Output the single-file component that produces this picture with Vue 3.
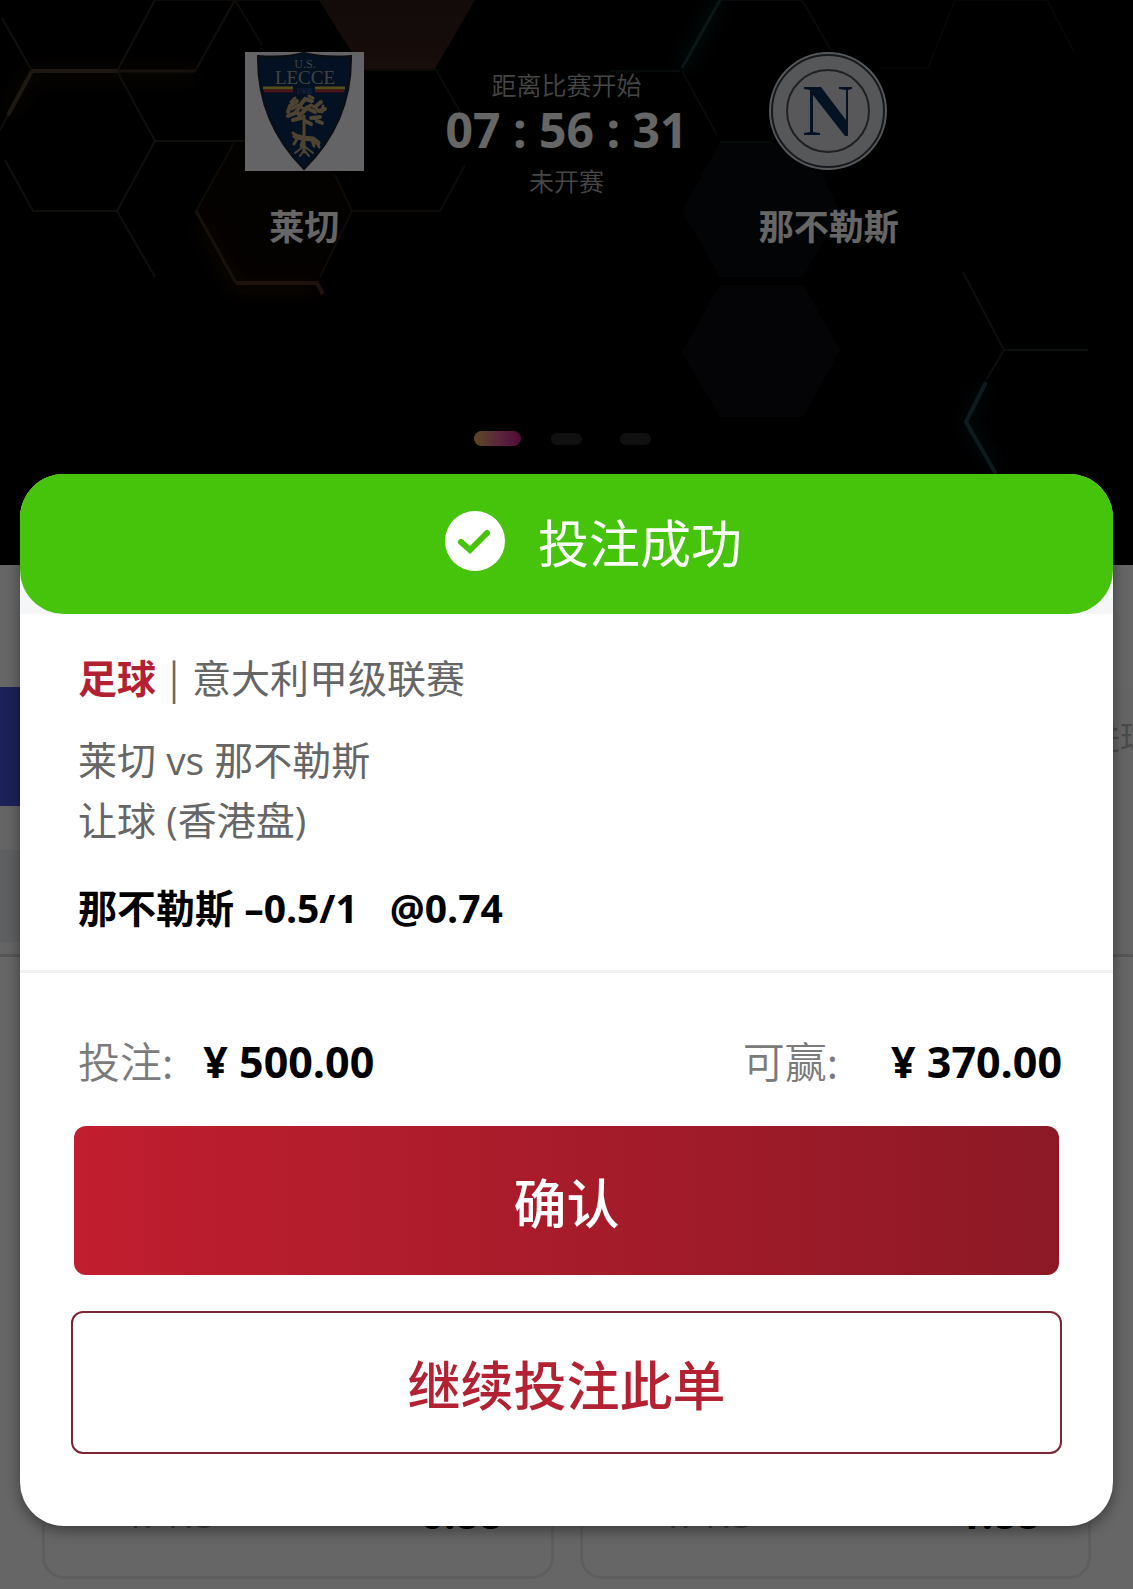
<script setup>
import { ref } from 'vue'

const open = ref(true)
const selections = [
  { line: '1/1.5', odds: '0.88' },
  { line: '1/1.5', odds: '1.88' },
]
</script>

<template>
  <div class="page">
    <header class="match">
      <svg class="hexes" viewBox="0 0 1133 565" preserveAspectRatio="xMidYMin slice" fill="none" aria-hidden="true">
        <defs>
          <filter id="glow" x="-50%" y="-50%" width="200%" height="200%">
            <feGaussianBlur stdDeviation="9" />
          </filter>
          <linearGradient id="amber" x1="0" y1="0" x2="0" y2="1">
            <stop offset="0" stop-color="#2c1c18" />
            <stop offset="1" stop-color="#3c231b" />
          </linearGradient>
        </defs>
        <path d="M319 0H475L434 70H363Z" fill="url(#amber)" />
        <path d="M235 141L196 211L236 283H317L352 211L330 160Z" fill="#0b0503" />
        <path d="M720 142H805L840 211L803 277H720L682 211Z" fill="#080a11" />
        <path d="M720 285H803L840 350L803 417H720L682 352Z" fill="#0a0c10" />
        <g filter="url(#glow)" stroke-width="12" opacity="0.6">
          <path d="M10 110L32 74H195" stroke="#2a1c08" />
          <path d="M200 222L236 288H318" stroke="#341606" />
          <path d="M720 0L682 68" stroke="#06302e" />
          <path d="M986 385L966 422L996 470" stroke="#08222e" />
        </g>
        <g stroke="#2c2620" stroke-width="2">
          <path d="M2 18L32 71M155 0L117 71L155 141L117 211L155 277M235 0L195 71" />
          <path d="M0 130L32 71H195M155 141H245M117 211H33L5 160" />
          <path d="M235 141L196 211L236 283M235 0L262 45M335 175L352 211H440L465 165M352 211L320 277" stroke="#251a14" />
          <path d="M363 70H436L462 115M156 0H320" stroke="#201b12" />
        </g>
        <path d="M32 71H117M32 71L8 115" stroke="#4a3d2c" stroke-width="4" />
        <path d="M117 71H195M196 211L236 283" stroke="#3a2c20" stroke-width="3" />
        <path d="M236 283H317L323 294" stroke="#4b2d1f" stroke-width="4" />
        <g stroke="#121c1c" stroke-width="2">
          <path d="M720 0H802L831 50M682 71L717 135M610 71H680M720 142H770" />
          <path d="M955 0L928 68H880M955 0H1047L1073 50" stroke="#0d1116" />
          <path d="M963 272L1004 350L986 380M1004 350H1088" stroke="#1b2626" />
        </g>
        <path d="M720 0L682 68" stroke="#1c3a3a" stroke-width="3" />
        <path d="M986 382L966 422L996 474" stroke="#21454a" stroke-width="4" />
      </svg>

      <div class="teams">
        <div class="team">
          <svg class="crest" viewBox="0 0 119 119" role="img" aria-label="Lecce">
            <rect width="119" height="119" fill="#fbf8fc" />
            <path d="M13 4Q40 6 59 1Q80 6 106 4Q107 70 59 117Q12 70 13 4Z" fill="#082c57" stroke="#1d242c" stroke-width="2" />
            <text x="60" y="16" class="crest-text" font-size="12">U.S.</text>
            <text x="60" y="32" class="crest-text" font-size="19">LECCE</text>
            <path d="M18 36H48M70 36H100" stroke="#d8c43c" stroke-width="3" />
            <path d="M19 39H48M70 39H99" stroke="#b0323c" stroke-width="3" />
            <text x="59" y="42" class="crest-text dim" font-size="8">1908</text>
            <g stroke="#c4a67c" fill="none" stroke-linecap="round">
              <path d="M59 64V100" stroke-width="3" />
              <path d="M43 60L45 54L52 49M56 52L60 47L67 49M71 54L76 50M74 59L80 57M43 64L50 61L54 56M56 62L62 56L70 60M66 66L75 65M48 68L56 66L52 60M60 69L66 72M72 69L77 71" stroke-width="4" />
              <path d="M46 50L50 46M64 44L68 46M78 54L77 60M47 57L53 53L59 57L66 53L72 57" stroke-width="3" />
              <path d="M50 84L57 86L68 87L73 91" stroke-width="5" />
              <path d="M52 87L49 92M58 88L56 94M67 88L69 94M48 81L52 84M73 91L74 95" stroke-width="3" />
              <path d="M59 94L50 101M59 94L68 101M59 98L55 104M59 98L64 104" stroke-width="2" />
            </g>
          </svg>
          <strong class="team-name">莱切</strong>
        </div>

        <div class="clock">
          <span class="clock-note">距离比赛开始</span>
          <strong class="clock-time">07 : 56 : 31</strong>
          <span class="clock-note">未开赛</span>
        </div>

        <div class="team">
          <svg class="crest" viewBox="0 0 119 119" role="img" aria-label="Napoli">
            <circle cx="59" cy="59" r="59" fill="#d4dade" />
            <circle cx="59" cy="59" r="56" fill="none" stroke="#37404a" stroke-width="2" />
            <circle cx="59" cy="59" r="41" fill="#dcdce0" stroke="#4b5056" stroke-width="2" />
            <path d="M35 35H52L77 68V38L70 37V35H83V37L79 38V84H76L44 43V80L51 81V83H35V81L41 80V38L35 37Z" fill="#0a2e58" />
          </svg>
          <strong class="team-name">那不勒斯</strong>
        </div>
      </div>

      <div class="pager">
        <span class="dot active"></span>
        <span class="dot"></span>
        <span class="dot"></span>
      </div>
    </header>

    <div class="strip"></div>
    <nav class="tabs">
      <span class="tab current"></span>
      <span class="tab">进球</span>
    </nav>
    <div class="filters"><span class="filter"></span></div>
    <main class="markets">
      <section v-for="(item, i) in selections" :key="i" class="market">
        <span class="market-line">{{ item.line }}</span>
        <strong class="market-odds">{{ item.odds }}</strong>
      </section>
    </main>

    <div v-if="open" class="overlay">
      <section class="dialog" role="dialog" aria-labelledby="dialog-title">
        <div class="dialog-head">
          <div class="banner">
            <svg class="tick" viewBox="0 0 60 60" aria-hidden="true">
              <circle cx="30" cy="30" r="30" fill="#fff" />
              <path d="M16 31L25 39L42 22" fill="none" stroke="#46c30b" stroke-width="6" stroke-linecap="round" stroke-linejoin="miter" />
            </svg>
            <h1 id="dialog-title" class="banner-title">投注成功</h1>
          </div>
        </div>

        <div class="details">
          <p class="row league"><strong class="sport">足球</strong> <span class="bar">|</span> 意大利甲级联赛</p>
          <p class="row">莱切 vs 那不勒斯</p>
          <p class="row">让球 (香港盘)</p>
          <p class="row pick"><span>那不勒斯 –0.5/1</span><span>@0.74</span></p>
        </div>

        <div class="summary">
          <dl class="money">
            <div class="sum">
              <dt>投注:</dt>
              <dd>¥ 500.00</dd>
            </div>
            <div class="sum win">
              <dt>可赢:</dt>
              <dd>¥ 370.00</dd>
            </div>
          </dl>
          <button type="button" class="btn primary" @click="open = false">确认</button>
          <button type="button" class="btn outline">继续投注此单</button>
        </div>
      </section>
    </div>
  </div>
</template>

<style>
body {
  margin: 0;
  background: #fff;
}
</style>

<style scoped>
.page {
  position: relative;
  min-height: 100vh;
  overflow: hidden;
  background: #fff;
  font-family: "Noto Sans CJK SC", sans-serif;
}

.match {
  position: relative;
  display: flex;
  flex-direction: column;
  justify-content: space-between;
  box-sizing: border-box;
  height: 565px;
  padding: 52px 42px 119px;
  background: #020203;
  color: #fff;
}

.hexes {
  position: absolute;
  inset: 0;
  width: 100%;
  height: 100%;
}

.teams {
  position: relative;
  display: flex;
  justify-content: center;
}

.team,
.clock {
  display: flex;
  flex: 0 1 25%;
  flex-direction: column;
  align-items: center;
}

.crest {
  width: 119px;
  height: 119px;
}

.crest-text {
  fill: #a3a7a4;
  font-family: "Liberation Serif", serif;
  text-anchor: middle;
}

.crest-text.dim {
  fill: #56708c;
}

.team-name {
  margin-top: 29px;
  font-size: 35px;
  line-height: 50px;
}

.clock {
  padding-top: 14px;
  white-space: nowrap;
}

.clock-note {
  color: #b0aeae;
  font-size: 25px;
  font-weight: 350;
  line-height: 36px;
}

.clock-time {
  margin-bottom: 4px;
  font-family: "Open Sans", "Noto Sans CJK SC", sans-serif;
  font-size: 48px;
  line-height: 56px;
}

.pager {
  position: relative;
  display: flex;
  align-items: center;
  justify-content: center;
  gap: 30px;
  padding-right: 8px;
  height: 15px;
}

.dot {
  width: 31px;
  height: 12px;
  border-radius: 6px;
  background: #2a2a2c;
}

.dot.active {
  width: 47px;
  height: 15px;
  border-radius: 8px;
  background: linear-gradient(90deg, #e8b45c, #e0569a 60%, #c41f86);
}

.dot:last-child {
  margin-left: 8px;
}

.strip {
  height: 122px;
}

.tabs {
  display: flex;
  justify-content: space-between;
  height: 119px;
  overflow: hidden;
  background: #f7f9f8;
}

.tab {
  margin-right: -20px;
  color: #b8baba;
  font-size: 33px;
  line-height: 98px;
  white-space: nowrap;
}

.tab.current {
  width: 220px;
  background: #4553da;
}

.filters {
  box-sizing: border-box;
  height: 151px;
  padding-top: 44px;
  border-bottom: 3px solid #d6d6d6;
  background: #fbfbfb;
}

.filter {
  display: block;
  width: 180px;
  height: 92px;
  background: #ebeef2;
}

.markets {
  display: flex;
  gap: 26px;
  padding: 390px 42px 10px;
}

.market {
  display: flex;
  flex: 1;
  align-items: flex-end;
  justify-content: space-between;
  box-sizing: border-box;
  height: 232px;
  padding: 0 48px 34px 78px;
  border: 3px solid #eaeaea;
  border-radius: 22px;
  font-family: "Open Sans", sans-serif;
  line-height: 58px;
}

.market-line {
  color: #999;
  font-size: 40px;
}

.market-odds {
  color: #000;
  font-size: 41px;
}

.overlay {
  position: absolute;
  inset: 0;
  display: flex;
  align-items: flex-end;
  padding: 20px 20px 63px;
  background: rgba(0, 0, 0, 0.6);
}

.dialog {
  flex: 1;
  overflow: hidden;
  border-radius: 44px;
  background: #fff;
  box-shadow: 0 5px 14px rgba(0, 0, 0, 0.4);
}

.dialog-head {
  background: linear-gradient(#46c30b 50%, #f4f6f8 50%);
}

.banner {
  display: flex;
  align-items: center;
  justify-content: center;
  gap: 33px;
  box-sizing: border-box;
  height: 140px;
  padding: 0 0 6px 54px;
  border-radius: 44px;
  background: #46c30b;
}

.tick {
  width: 60px;
  height: 60px;
}

.banner-title {
  margin: 0;
  color: #fff;
  font-size: 51px;
  font-weight: 400;
  line-height: 72px;
}

.details {
  padding: 32px 58px 32px;
  border-bottom: 3px solid #f1f1f1;
}

.row {
  margin: 0;
  color: #666;
  font-family: "Open Sans", "Noto Sans CJK SC", sans-serif;
  font-size: 39px;
  line-height: 60px;
}

.league {
  margin-bottom: 24px;
  font-family: "Noto Sans CJK SC", sans-serif;
}

.sport {
  color: #b22032;
}

.bar {
  margin: 0 4px;
}

.pick {
  display: flex;
  gap: 32px;
  margin-top: 28px;
  color: #000;
  font-weight: 700;
}

.summary {
  padding: 57px 51px 72px;
}

.money {
  display: flex;
  justify-content: space-between;
  height: 60px;
  margin: 0 0 36px;
  padding-left: 7px;
  line-height: 60px;
}

.sum {
  display: flex;
  align-items: baseline;
  gap: 30px;
}

.win {
  gap: 53px;
}

.sum dt {
  color: #7b7b7b;
  font-size: 42px;
  font-weight: 350;
}

.sum dd {
  margin: 0;
  color: #000;
  font-family: "Open Sans", "Noto Sans CJK SC", sans-serif;
  font-size: 43px;
  font-weight: 700;
}

.btn {
  display: block;
  box-sizing: border-box;
  border-radius: 12px;
  font-family: inherit;
  font-size: 53px;
  font-weight: 500;
  line-height: 76px;
  cursor: pointer;
}

.primary {
  width: calc(100% - 6px);
  height: 149px;
  margin: 0 3px 36px;
  border: 0;
  background: linear-gradient(90deg, #c11e2f, #8d1926);
  color: #fff;
}

.outline {
  width: 100%;
  height: 143px;
  border: 2px solid #7c2536;
  background: #fff;
  color: #b22233;
}
</style>
